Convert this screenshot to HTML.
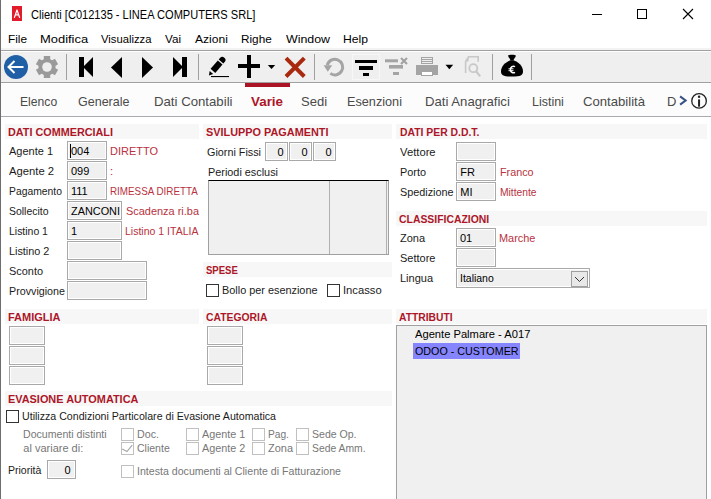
<!DOCTYPE html>
<html><head><meta charset="utf-8"><style>
html,body{margin:0;padding:0;}
body{width:711px;height:499px;overflow:hidden;position:relative;background:#fff;font-family:"Liberation Sans", sans-serif;}
span{position:absolute;white-space:pre;line-height:1;}
</style></head><body>
<div style="position:absolute;left:0px;top:0px;width:1px;height:499px;background:#6e6e6e"></div><div style="position:absolute;left:12px;top:6px;width:10px;height:15px;background:#e21b2b"></div><svg style="position:absolute;left:12px;top:6px" width="10" height="15"><path d="M2.3 11.9 L5 4 L7.7 11.9 M3.3 8.9 H6.7" stroke="#fff" stroke-width="1.25" fill="none" stroke-linejoin="round"/></svg><div style="position:absolute;left:592px;top:14px;width:10px;height:1px;background:#000"></div><div style="position:absolute;left:637px;top:9px;width:8px;height:8px;border:1px solid #000"></div><svg style="position:absolute;left:682px;top:8px" width="12" height="12"><path d="M1 1 L11 11 M11 1 L1 11" stroke="#000" stroke-width="1.1"/></svg><div style="position:absolute;left:1px;top:48px;width:710px;height:2px;background:#f3f3f3"></div><div style="position:absolute;left:1px;top:50px;width:710px;height:1px;background:#a0a0a0"></div><div style="position:absolute;left:1px;top:51px;width:710px;height:1px;background:#ffffff"></div><div style="position:absolute;left:1px;top:52px;width:710px;height:30px;background:#efefef"></div><div style="position:absolute;left:1px;top:82px;width:710px;height:1px;background:#a0a0a0"></div><div style="position:absolute;left:1px;top:83px;width:710px;height:1px;background:#ffffff"></div><div style="position:absolute;left:1px;top:84px;width:710px;height:32px;background:#fcfcfc"></div><div style="position:absolute;left:1px;top:116px;width:710px;height:1px;background:#a9a9b0"></div><div style="position:absolute;left:66px;top:54px;width:1px;height:26px;background:#a0a0a0"></div><div style="position:absolute;left:198px;top:54px;width:1px;height:26px;background:#a0a0a0"></div><div style="position:absolute;left:314px;top:54px;width:1px;height:26px;background:#a0a0a0"></div><div style="position:absolute;left:492px;top:54px;width:1px;height:26px;background:#a0a0a0"></div><div style="position:absolute;left:531px;top:54px;width:1px;height:26px;background:#a0a0a0"></div>
<svg style="position:absolute;left:0;top:50px" width="711" height="34">
 <!-- back -->
 <circle cx="16" cy="17" r="12" fill="#1e5fa6"/>
 <path d="M8.5 17 H23.5 M14.5 11 L8.5 17 L14.5 23" stroke="#fff" stroke-width="2" fill="none"/>
 <!-- gear -->
 <g transform="translate(47,17)" fill="#9a9a9a">
  <circle r="8.6"/>
  <rect x="-3.2" y="-11" width="6.4" height="6"/>
  <rect x="-3.2" y="5" width="6.4" height="6"/>
  <g transform="rotate(60)"><rect x="-3.2" y="-11" width="6.4" height="6"/><rect x="-3.2" y="5" width="6.4" height="6"/></g>
  <g transform="rotate(120)"><rect x="-3.2" y="-11" width="6.4" height="6"/><rect x="-3.2" y="5" width="6.4" height="6"/></g>
  <circle r="4.8" fill="#efefef"/>
 </g>
 <!-- first -->
 <rect x="79" y="7" width="5" height="20" fill="#000"/>
 <path d="M93 7 V27 L83 17 Z" fill="#000"/>
 <!-- prev -->
 <path d="M122 7 V28 L111 17.5 Z" fill="#000"/>
 <!-- next -->
 <path d="M142 7 V28 L153 17.5 Z" fill="#000"/>
 <!-- last -->
 <path d="M173 7 V27 L183 17 Z" fill="#000"/>
 <rect x="182" y="7" width="5" height="20" fill="#000"/>
 <!-- pencil -->
 <g transform="translate(208.8,25.6) rotate(-49)" fill="#000">
  <path d="M0.2 0 L4 -2.3 L4 2.3 Z"/>
  <rect x="6.3" y="-3.1" width="11" height="6.2"/>
  <path d="M18.6 -3.1 H20.6 A3.1 3.1 0 0 1 20.6 3.1 H18.6 Z"/>
 </g>
 <rect x="211" y="26" width="18" height="1.1" fill="#000"/>
 <!-- plus -->
 <rect x="247" y="5" width="4" height="23" fill="#000"/>
 <rect x="238" y="14" width="22" height="4" fill="#000"/>
 <path d="M267.8 15 H275.2 L271.5 19 Z" fill="#000"/>
 <!-- red x -->
 <path d="M286 8.2 L304.3 26.5 M304.3 8.2 L286 26.5" stroke="#a8290e" stroke-width="4"/>
 <!-- undo -->
 <path d="M327.3 15.2 A7.8 7.8 0 1 1 330.3 23.4" stroke="#a4a4a4" stroke-width="3" fill="none"/>
 <path d="M323.6 15.2 H332.2 L327.8 21.8 Z" fill="#a4a4a4"/>
 <!-- filter focus -->
 <rect x="352.5" y="4.5" width="27" height="25" fill="none" stroke="#ffffff" stroke-width="1" stroke-dasharray="1 1"/>
 <rect x="355" y="10" width="22" height="3" fill="#000"/>
 <rect x="359" y="16" width="14" height="4" fill="#000"/>
 <rect x="363" y="23" width="6" height="3" fill="#000"/>
 <!-- filter clear -->
 <rect x="385" y="9.3" width="13" height="3" fill="#a4a4a4"/>
 <rect x="389" y="15" width="14" height="3.6" fill="#a4a4a4"/>
 <rect x="393" y="22" width="6" height="3" fill="#a4a4a4"/>
 <path d="M401 8 L407 14 M407 8 L401 14" stroke="#a0a0a0" stroke-width="2"/>
 <!-- printer -->
 <rect x="421" y="7" width="12" height="7" fill="#a4a4a4"/>
 <rect x="422" y="8" width="10" height="1" fill="#efefef"/>
 <rect x="422" y="10" width="10" height="1" fill="#efefef"/>
 <rect x="422" y="12" width="10" height="1" fill="#efefef"/>
 <rect x="416" y="15" width="22" height="10" fill="#a4a4a4"/>
 <rect x="421" y="21" width="12" height="5" fill="#a4a4a4"/>
 <rect x="422" y="22" width="10" height="3" fill="#ffffff"/>
 <path d="M445.5 14.7 H453.2 L449.35 19.2 Z" fill="#000"/>
 <!-- preview -->
 <path d="M465.6 23 V11.5 L468.6 6.8 H478.2 V11.8" stroke="#c8c8c8" stroke-width="1.6" fill="none"/>
 <path d="M465.4 11.5 L468.6 6.8 V11.5 Z" fill="#c8c8c8"/>
 <circle cx="473.3" cy="18.2" r="4" stroke="#c8c8c8" stroke-width="1.8" fill="none"/>
 <path d="M476 21.2 L480.2 26.4" stroke="#c8c8c8" stroke-width="2.2"/>
 <!-- money bag -->
 <path d="M510.5 10.3 C506 11.8 501 15.8 501 21.3 C501 25.5 503.5 26.6 512 26.6 C520.5 26.6 523 25.5 523 21.3 C523 15.8 518 11.8 513.5 10.3 Z" fill="#000"/>
 <path d="M508.2 5.6 C508.6 4.3 515.4 4.3 515.8 5.6 C516 7.1 514 8.6 513.4 10.6 L510.6 10.6 C510 8.6 508 7.1 508.2 5.6 Z" fill="#000"/>
 <path d="M515 16.6 A3.1 3.3 0 1 0 515 22.4" stroke="#fff" stroke-width="1.5" fill="none"/>
 <path d="M508.5 18.8 H513.5 M508.5 20.7 H513.5" stroke="#fff" stroke-width="1"/>
</svg>
<div style="position:absolute;left:245px;top:83px;width:45px;height:4px;background:#aa1424"></div><svg style="position:absolute;left:675px;top:90px" width="36" height="22"><path d="M5.1 6.3 L10.6 10.5 L5.1 14.7" stroke="#3a5288" stroke-width="2.1" fill="none"/><circle cx="24.05" cy="10.9" r="7.3" stroke="#222" stroke-width="1.3" fill="none"/><rect x="23.05" y="9.4" width="2" height="7.3" fill="#222"/><circle cx="24.05" cy="6.8" r="1.25" fill="#222"/></svg><div style="position:absolute;left:5px;top:124px;width:194px;height:15px;background:#f7f7f7"></div><div style="position:absolute;left:67px;top:141px;width:38px;height:17px;border:1px solid #a9a9a9;background:#f0f0f0;box-shadow:inset 0 0 0 1px #ffffff"></div><div style="position:absolute;left:67px;top:161px;width:38px;height:17px;border:1px solid #a9a9a9;background:#f0f0f0;box-shadow:inset 0 0 0 1px #ffffff"></div><div style="position:absolute;left:67px;top:181px;width:38px;height:17px;border:1px solid #a9a9a9;background:#f0f0f0;box-shadow:inset 0 0 0 1px #ffffff"></div><div style="position:absolute;left:67px;top:201px;width:53px;height:17px;border:1px solid #a9a9a9;background:#f0f0f0;box-shadow:inset 0 0 0 1px #ffffff"></div><div style="position:absolute;left:67px;top:221px;width:53px;height:17px;border:1px solid #a9a9a9;background:#f0f0f0;box-shadow:inset 0 0 0 1px #ffffff"></div><div style="position:absolute;left:67px;top:241px;width:53px;height:17px;border:1px solid #a9a9a9;background:#f0f0f0;box-shadow:inset 0 0 0 1px #ffffff"></div><div style="position:absolute;left:67px;top:261px;width:78px;height:17px;border:1px solid #a9a9a9;background:#f0f0f0;box-shadow:inset 0 0 0 1px #ffffff"></div><div style="position:absolute;left:67px;top:281px;width:78px;height:17px;border:1px solid #a9a9a9;background:#f0f0f0;box-shadow:inset 0 0 0 1px #ffffff"></div><div style="position:absolute;left:70px;top:144px;width:1px;height:14px;background:#000"></div><div style="position:absolute;left:203px;top:124px;width:189px;height:15px;background:#f7f7f7"></div><div style="position:absolute;left:265px;top:142px;width:21px;height:17px;border:1px solid #a9a9a9;background:#f0f0f0;box-shadow:inset 0 0 0 1px #ffffff"></div><div style="position:absolute;left:289px;top:142px;width:21px;height:17px;border:1px solid #a9a9a9;background:#f0f0f0;box-shadow:inset 0 0 0 1px #ffffff"></div><div style="position:absolute;left:313px;top:142px;width:21px;height:17px;border:1px solid #a9a9a9;background:#f0f0f0;box-shadow:inset 0 0 0 1px #ffffff"></div><div style="position:absolute;left:208px;top:180px;width:179px;height:73px;border:1px solid #a0a0a0;border-top-color:#000;background:#f0f0f0"></div><div style="position:absolute;left:329px;top:181px;width:1px;height:73px;background:#b0b0b0"></div><div style="position:absolute;left:386px;top:181px;width:1px;height:73px;background:#b0b0b0"></div><div style="position:absolute;left:203px;top:262px;width:189px;height:15px;background:#f7f7f7"></div><div style="position:absolute;left:206px;top:284px;width:11px;height:11px;border:1px solid #333333;background:#fff"></div><div style="position:absolute;left:327px;top:284px;width:11px;height:11px;border:1px solid #333333;background:#fff"></div><div style="position:absolute;left:396px;top:124px;width:311px;height:15px;background:#f7f7f7"></div><div style="position:absolute;left:456px;top:142px;width:38px;height:17px;border:1px solid #a9a9a9;background:#f0f0f0;box-shadow:inset 0 0 0 1px #ffffff"></div><div style="position:absolute;left:456px;top:162px;width:38px;height:17px;border:1px solid #a9a9a9;background:#f0f0f0;box-shadow:inset 0 0 0 1px #ffffff"></div><div style="position:absolute;left:456px;top:182px;width:38px;height:17px;border:1px solid #a9a9a9;background:#f0f0f0;box-shadow:inset 0 0 0 1px #ffffff"></div><div style="position:absolute;left:396px;top:211px;width:311px;height:15px;background:#f7f7f7"></div><div style="position:absolute;left:456px;top:228px;width:38px;height:17px;border:1px solid #a9a9a9;background:#f0f0f0;box-shadow:inset 0 0 0 1px #ffffff"></div><div style="position:absolute;left:456px;top:248px;width:38px;height:17px;border:1px solid #a9a9a9;background:#f0f0f0;box-shadow:inset 0 0 0 1px #ffffff"></div><div style="position:absolute;left:456px;top:268px;width:132px;height:18px;border:1px solid #a9a9a9;background:#f0f0f0;box-shadow:inset 0 0 0 1px #ffffff"></div><div style="position:absolute;left:571px;top:271px;width:15px;height:14px;border:1px solid #a0a0a0;background:#e8e8e8"></div><svg style="position:absolute;left:571px;top:271px" width="17" height="16"><path d="M4 6 L8.5 10.5 L13 6" stroke="#333" stroke-width="1" fill="none"/></svg><div style="position:absolute;left:5px;top:309px;width:194px;height:15px;background:#f7f7f7"></div><div style="position:absolute;left:203px;top:309px;width:189px;height:15px;background:#f7f7f7"></div><div style="position:absolute;left:9px;top:326px;width:34px;height:17px;border:1px solid #a9a9a9;background:#f0f0f0;box-shadow:inset 0 0 0 1px #ffffff"></div><div style="position:absolute;left:207px;top:326px;width:34px;height:17px;border:1px solid #a9a9a9;background:#f0f0f0;box-shadow:inset 0 0 0 1px #ffffff"></div><div style="position:absolute;left:9px;top:346px;width:34px;height:17px;border:1px solid #a9a9a9;background:#f0f0f0;box-shadow:inset 0 0 0 1px #ffffff"></div><div style="position:absolute;left:207px;top:346px;width:34px;height:17px;border:1px solid #a9a9a9;background:#f0f0f0;box-shadow:inset 0 0 0 1px #ffffff"></div><div style="position:absolute;left:9px;top:366px;width:34px;height:17px;border:1px solid #a9a9a9;background:#f0f0f0;box-shadow:inset 0 0 0 1px #ffffff"></div><div style="position:absolute;left:207px;top:366px;width:34px;height:17px;border:1px solid #a9a9a9;background:#f0f0f0;box-shadow:inset 0 0 0 1px #ffffff"></div><div style="position:absolute;left:396px;top:309px;width:311px;height:15px;background:#f7f7f7"></div><div style="position:absolute;left:396px;top:325px;width:309px;height:200px;border:1px solid #a0a0a0;background:#f0f0f0"></div><div style="position:absolute;left:413px;top:343px;width:107px;height:16px;background:#8585ff"></div><div style="position:absolute;left:5px;top:391px;width:387px;height:15px;background:#f7f7f7"></div><div style="position:absolute;left:6px;top:410px;width:11px;height:11px;border:1px solid #333333;background:#fff"></div><div style="position:absolute;left:121px;top:428px;width:11px;height:11px;border:1px solid #c0c0c0;background:#fff"></div><div style="position:absolute;left:121px;top:442px;width:11px;height:11px;border:1px solid #c0c0c0;background:#fff"></div><svg style="position:absolute;left:121px;top:442px" width="13" height="13"><path d="M1.2 7 L6 9.6 L11.2 3.2" stroke="#a8a8a8" stroke-width="1.2" fill="none"/></svg><div style="position:absolute;left:186px;top:428px;width:11px;height:11px;border:1px solid #c0c0c0;background:#fff"></div><div style="position:absolute;left:186px;top:442px;width:11px;height:11px;border:1px solid #c0c0c0;background:#fff"></div><div style="position:absolute;left:252px;top:428px;width:11px;height:11px;border:1px solid #c0c0c0;background:#fff"></div><div style="position:absolute;left:252px;top:442px;width:11px;height:11px;border:1px solid #c0c0c0;background:#fff"></div><div style="position:absolute;left:296px;top:428px;width:11px;height:11px;border:1px solid #c0c0c0;background:#fff"></div><div style="position:absolute;left:296px;top:442px;width:11px;height:11px;border:1px solid #c0c0c0;background:#fff"></div><div style="position:absolute;left:47px;top:460px;width:27px;height:17px;border:1px solid #a9a9a9;background:#f0f0f0;box-shadow:inset 0 0 0 1px #ffffff"></div><div style="position:absolute;left:121px;top:465px;width:11px;height:11px;border:1px solid #c0c0c0;background:#fff"></div>
<span id="t0" style="left:31px;top:8.84px;font-size:12px;font-weight:400;color:#000;transform:scaleX(0.9219);transform-origin:0 0;">Clienti [C012135 - LINEA COMPUTERS SRL]</span><span id="t1" style="left:8px;top:34.27px;font-size:11.5px;font-weight:400;color:#000;transform:scaleX(1.0267);transform-origin:0 0;">File</span><span id="t2" style="left:40px;top:34.27px;font-size:11.5px;font-weight:400;color:#000;transform:scaleX(1.1236);transform-origin:0 0;">Modifica</span><span id="t3" style="left:101px;top:34.27px;font-size:11.5px;font-weight:400;color:#000;transform:scaleX(0.9787);transform-origin:0 0;">Visualizza</span><span id="t4" style="left:165px;top:34.27px;font-size:11.5px;font-weight:400;color:#000;transform:scaleX(1.0148);transform-origin:0 0;">Vai</span><span id="t5" style="left:194.6px;top:34.27px;font-size:11.5px;font-weight:400;color:#000;transform:scaleX(1.0485);transform-origin:0 0;">Azioni</span><span id="t6" style="left:241.3px;top:34.27px;font-size:11.5px;font-weight:400;color:#000;transform:scaleX(1.0219);transform-origin:0 0;">Righe</span><span id="t7" style="left:285.5px;top:34.27px;font-size:11.5px;font-weight:400;color:#000;transform:scaleX(1.0775);transform-origin:0 0;">Window</span><span id="t8" style="left:343px;top:34.27px;font-size:11.5px;font-weight:400;color:#000;transform:scaleX(1.0593);transform-origin:0 0;">Help</span><span id="t9" style="left:19.8px;top:95.00px;font-size:13px;font-weight:400;color:#4a4a4a;transform:scaleX(0.9342);transform-origin:0 0;">Elenco</span><span id="t10" style="left:77.5px;top:95.00px;font-size:13px;font-weight:400;color:#4a4a4a;transform:scaleX(0.9622);transform-origin:0 0;">Generale</span><span id="t11" style="left:153.5px;top:95.00px;font-size:13px;font-weight:400;color:#4a4a4a;transform:scaleX(1.0154);transform-origin:0 0;">Dati Contabili</span><span id="t12" style="left:347px;top:95.00px;font-size:13px;font-weight:400;color:#4a4a4a;transform:scaleX(0.9752);transform-origin:0 0;">Esenzioni</span><span id="t13" style="left:301px;top:95.00px;font-size:13px;font-weight:400;color:#4a4a4a;">Sedi</span><span id="t14" style="left:424.8px;top:95.00px;font-size:13px;font-weight:400;color:#4a4a4a;transform:scaleX(1.0117);transform-origin:0 0;">Dati Anagrafici</span><span id="t15" style="left:531.5px;top:95.00px;font-size:13px;font-weight:400;color:#4a4a4a;transform:scaleX(0.9581);transform-origin:0 0;">Listini</span><span id="t16" style="left:582.7px;top:95.00px;font-size:13px;font-weight:400;color:#4a4a4a;transform:scaleX(1.0093);transform-origin:0 0;">Contabilità</span><span id="t17" style="left:667px;top:95.00px;font-size:13px;font-weight:400;color:#4a4a4a;">D</span><span id="t18" style="left:251px;top:95.00px;font-size:13px;font-weight:700;color:#ad1628;transform:scaleX(1.0301);transform-origin:0 0;">Varie</span><span id="t19" style="left:8px;top:126.69px;font-size:11px;font-weight:700;color:#ad1628;transform:scaleX(0.9836);transform-origin:0 0;">DATI COMMERCIALI</span><span id="t20" style="left:9px;top:145.69px;font-size:11px;font-weight:400;color:#1a1a1a;">Agente 1</span><span id="t21" style="left:9px;top:165.69px;font-size:11px;font-weight:400;color:#1a1a1a;transform:scaleX(1.0221);transform-origin:0 0;">Agente 2</span><span id="t22" style="left:9px;top:185.69px;font-size:11px;font-weight:400;color:#1a1a1a;transform:scaleX(0.9409);transform-origin:0 0;">Pagamento</span><span id="t23" style="left:9px;top:205.69px;font-size:11px;font-weight:400;color:#1a1a1a;transform:scaleX(0.9513);transform-origin:0 0;">Sollecito</span><span id="t24" style="left:9px;top:225.69px;font-size:11px;font-weight:400;color:#1a1a1a;transform:scaleX(0.9504);transform-origin:0 0;">Listino 1</span><span id="t25" style="left:9px;top:245.69px;font-size:11px;font-weight:400;color:#1a1a1a;transform:scaleX(0.9854);transform-origin:0 0;">Listino 2</span><span id="t26" style="left:9px;top:265.69px;font-size:11px;font-weight:400;color:#1a1a1a;transform:scaleX(0.9925);transform-origin:0 0;">Sconto</span><span id="t27" style="left:9px;top:285.69px;font-size:11px;font-weight:400;color:#1a1a1a;transform:scaleX(0.9737);transform-origin:0 0;">Provvigione</span><span id="t28" style="left:71px;top:145.69px;font-size:11px;font-weight:400;color:#000;">004</span><span id="t29" style="left:110px;top:145.69px;font-size:11px;font-weight:400;color:#b83240;">DIRETTO</span><span id="t30" style="left:71px;top:165.69px;font-size:11px;font-weight:400;color:#000;">099</span><span id="t31" style="left:110px;top:165.69px;font-size:11px;font-weight:400;color:#b83240;">:</span><span id="t32" style="left:71px;top:185.69px;font-size:11px;font-weight:400;color:#000;">111</span><span id="t33" style="left:110px;top:185.69px;font-size:11px;font-weight:400;color:#b83240;transform:scaleX(0.8950);transform-origin:0 0;">RIMESSA DIRETTA</span><span id="t34" style="left:71px;top:205.69px;font-size:11px;font-weight:400;color:#000;transform:scaleX(0.9897);transform-origin:0 0;">ZANCONI</span><span id="t35" style="left:126px;top:205.69px;font-size:11px;font-weight:400;color:#b83240;transform:scaleX(0.9946);transform-origin:0 0;">Scadenza ri.ba</span><span id="t36" style="left:71px;top:225.69px;font-size:11px;font-weight:400;color:#000;">1</span><span id="t37" style="left:125px;top:225.69px;font-size:11px;font-weight:400;color:#b83240;transform:scaleX(0.9559);transform-origin:0 0;">Listino 1 ITALIA</span><span id="t38" style="left:206px;top:126.69px;font-size:11px;font-weight:700;color:#ad1628;transform:scaleX(0.9888);transform-origin:0 0;">SVILUPPO PAGAMENTI</span><span id="t39" style="left:207px;top:146.69px;font-size:11px;font-weight:400;color:#1a1a1a;transform:scaleX(0.9812);transform-origin:0 0;">Giorni Fissi</span><span id="t40" style="left:277.5px;top:146.69px;font-size:11px;font-weight:400;color:#000;">0</span><span id="t41" style="left:301.5px;top:146.69px;font-size:11px;font-weight:400;color:#000;">0</span><span id="t42" style="left:325.5px;top:146.69px;font-size:11px;font-weight:400;color:#000;">0</span><span id="t43" style="left:208px;top:166.69px;font-size:11px;font-weight:400;color:#1a1a1a;transform:scaleX(0.9868);transform-origin:0 0;">Periodi esclusi</span><span id="t44" style="left:206px;top:264.69px;font-size:11px;font-weight:700;color:#ad1628;transform:scaleX(0.8687);transform-origin:0 0;">SPESE</span><span id="t45" style="left:222px;top:284.69px;font-size:11px;font-weight:400;color:#1a1a1a;transform:scaleX(0.9882);transform-origin:0 0;">Bollo per esenzione</span><span id="t46" style="left:343px;top:284.69px;font-size:11px;font-weight:400;color:#1a1a1a;transform:scaleX(1.0184);transform-origin:0 0;">Incasso</span><span id="t47" style="left:399.5px;top:126.69px;font-size:11px;font-weight:700;color:#ad1628;transform:scaleX(0.9442);transform-origin:0 0;">DATI PER D.D.T.</span><span id="t48" style="left:400px;top:146.69px;font-size:11px;font-weight:400;color:#1a1a1a;transform:scaleX(1.0219);transform-origin:0 0;">Vettore</span><span id="t49" style="left:400px;top:166.69px;font-size:11px;font-weight:400;color:#1a1a1a;transform:scaleX(0.9883);transform-origin:0 0;">Porto</span><span id="t50" style="left:460.3px;top:166.69px;font-size:11px;font-weight:400;color:#000;">FR</span><span id="t51" style="left:499.7px;top:166.69px;font-size:11px;font-weight:400;color:#b83240;transform:scaleX(0.9805);transform-origin:0 0;">Franco</span><span id="t52" style="left:400px;top:186.69px;font-size:11px;font-weight:400;color:#1a1a1a;transform:scaleX(0.9843);transform-origin:0 0;">Spedizione</span><span id="t53" style="left:460.3px;top:186.69px;font-size:11px;font-weight:400;color:#000;">MI</span><span id="t54" style="left:499.7px;top:186.69px;font-size:11px;font-weight:400;color:#b83240;transform:scaleX(0.9334);transform-origin:0 0;">Mittente</span><span id="t55" style="left:399px;top:213.69px;font-size:11px;font-weight:700;color:#ad1628;transform:scaleX(0.9465);transform-origin:0 0;">CLASSIFICAZIONI</span><span id="t56" style="left:400px;top:232.69px;font-size:11px;font-weight:400;color:#1a1a1a;">Zona</span><span id="t57" style="left:460px;top:232.69px;font-size:11px;font-weight:400;color:#000;">01</span><span id="t58" style="left:499.3px;top:232.69px;font-size:11px;font-weight:400;color:#b83240;transform:scaleX(0.9919);transform-origin:0 0;">Marche</span><span id="t59" style="left:400px;top:252.69px;font-size:11px;font-weight:400;color:#1a1a1a;">Settore</span><span id="t60" style="left:400px;top:272.69px;font-size:11px;font-weight:400;color:#1a1a1a;">Lingua</span><span id="t61" style="left:460px;top:272.69px;font-size:11px;font-weight:400;color:#000;transform:scaleX(0.9512);transform-origin:0 0;">Italiano</span><span id="t62" style="left:8px;top:311.69px;font-size:11px;font-weight:700;color:#ad1628;">FAMIGLIA</span><span id="t63" style="left:206px;top:311.69px;font-size:11px;font-weight:700;color:#ad1628;transform:scaleX(0.9426);transform-origin:0 0;">CATEGORIA</span><span id="t64" style="left:399px;top:311.69px;font-size:11px;font-weight:700;color:#ad1628;transform:scaleX(0.9371);transform-origin:0 0;">ATTRIBUTI</span><span id="t65" style="left:415.3px;top:329.43px;font-size:11.3px;font-weight:400;color:#000;transform:scaleX(0.9878);transform-origin:0 0;">Agente Palmare - A017</span><span id="t66" style="left:415px;top:345.93px;font-size:11.3px;font-weight:400;color:#000;transform:scaleX(0.9500);transform-origin:0 0;">ODOO - CUSTOMER</span><span id="t67" style="left:8.4px;top:393.69px;font-size:11px;font-weight:700;color:#ad1628;transform:scaleX(0.9907);transform-origin:0 0;">EVASIONE AUTOMATICA</span><span id="t68" style="left:22px;top:410.69px;font-size:11px;font-weight:400;color:#1a1a1a;transform:scaleX(0.9660);transform-origin:0 0;">Utilizza Condizioni Particolare di Evasione Automatica</span><span id="t69" style="left:23.3px;top:428.69px;font-size:11px;font-weight:400;color:#777777;transform:scaleX(0.9636);transform-origin:0 0;">Documenti distinti</span><span id="t70" style="left:23.3px;top:442.69px;font-size:11px;font-weight:400;color:#777777;">al variare di:</span><span id="t71" style="left:137px;top:428.69px;font-size:11px;font-weight:400;color:#777777;transform:scaleX(0.9711);transform-origin:0 0;">Doc.</span><span id="t72" style="left:137px;top:442.69px;font-size:11px;font-weight:400;color:#777777;transform:scaleX(0.9564);transform-origin:0 0;">Cliente</span><span id="t73" style="left:202px;top:428.69px;font-size:11px;font-weight:400;color:#777777;transform:scaleX(0.9826);transform-origin:0 0;">Agente 1</span><span id="t74" style="left:202px;top:442.69px;font-size:11px;font-weight:400;color:#777777;transform:scaleX(0.9826);transform-origin:0 0;">Agente 2</span><span id="t75" style="left:268px;top:428.69px;font-size:11px;font-weight:400;color:#777777;transform:scaleX(0.9242);transform-origin:0 0;">Pag.</span><span id="t76" style="left:268px;top:442.69px;font-size:11px;font-weight:400;color:#777777;transform:scaleX(0.9968);transform-origin:0 0;">Zona</span><span id="t77" style="left:312px;top:428.69px;font-size:11px;font-weight:400;color:#777777;transform:scaleX(0.9586);transform-origin:0 0;">Sede Op.</span><span id="t78" style="left:312px;top:442.69px;font-size:11px;font-weight:400;color:#777777;transform:scaleX(0.9417);transform-origin:0 0;">Sede Amm.</span><span id="t79" style="left:8.4px;top:464.69px;font-size:11px;font-weight:400;color:#1a1a1a;transform:scaleX(0.9573);transform-origin:0 0;">Priorità</span><span id="t80" style="left:64.5px;top:464.69px;font-size:11px;font-weight:400;color:#000;">0</span><span id="t81" style="left:137px;top:465.69px;font-size:11px;font-weight:400;color:#777777;transform:scaleX(0.9641);transform-origin:0 0;">Intesta documenti al Cliente di Fatturazione</span>
</body></html>
